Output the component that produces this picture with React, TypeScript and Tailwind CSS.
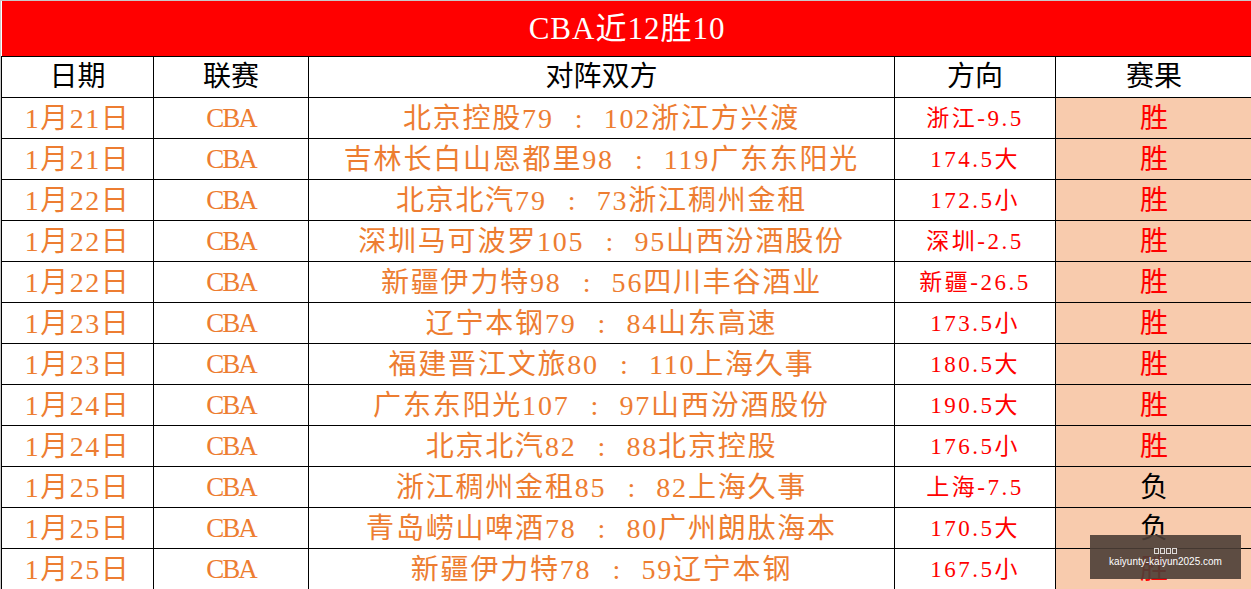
import React from "react"

type Row = {
  date: string
  home: string
  away: string
  dir: string
  result: "胜" | "负"
}

const rows: Row[] = [
  { date: "1月21日", home: "北京控股79", away: "102浙江方兴渡", dir: "浙江-9.5", result: "胜" },
  { date: "1月21日", home: "吉林长白山恩都里98", away: "119广东东阳光", dir: "174.5大", result: "胜" },
  { date: "1月22日", home: "北京北汽79", away: "73浙江稠州金租", dir: "172.5小", result: "胜" },
  { date: "1月22日", home: "深圳马可波罗105", away: "95山西汾酒股份", dir: "深圳-2.5", result: "胜" },
  { date: "1月22日", home: "新疆伊力特98", away: "56四川丰谷酒业", dir: "新疆-26.5", result: "胜" },
  { date: "1月23日", home: "辽宁本钢79", away: "84山东高速", dir: "173.5小", result: "胜" },
  { date: "1月23日", home: "福建晋江文旅80", away: "110上海久事", dir: "180.5大", result: "胜" },
  { date: "1月24日", home: "广东东阳光107", away: "97山西汾酒股份", dir: "190.5大", result: "胜" },
  { date: "1月24日", home: "北京北汽82", away: "88北京控股", dir: "176.5小", result: "胜" },
  { date: "1月25日", home: "浙江稠州金租85", away: "82上海久事", dir: "上海-7.5", result: "负" },
  { date: "1月25日", home: "青岛崂山啤酒78", away: "80广州朗肽海本", dir: "170.5大", result: "负" },
  { date: "1月25日", home: "新疆伊力特78", away: "59辽宁本钢", dir: "167.5小", result: "胜" },
]

const font = "font-['Liberation_Serif','Noto_Sans_CJK_SC',serif]"

export default function App() {
  return (
    <div className={`relative w-[1251px] h-[589px] overflow-hidden bg-white border-t border-l border-[#c8c8c8] ${font}`}>
      <table className="w-[1251px] table-fixed border-collapse">
        <colgroup>
          <col className="w-[152px]" />
          <col className="w-[155px]" />
          <col className="w-[586px]" />
          <col className="w-[161px]" />
          <col className="w-[197px]" />
        </colgroup>
        <thead>
          <tr className="h-[55px]">
            <th colSpan={5} className="bg-[#ff0000] text-white text-[31px] font-normal text-center border-b border-black leading-none tracking-[1px]">
              CBA近12胜10
            </th>
          </tr>
          <tr className="h-[41px] text-[28px] text-black">
            <th className="font-normal border border-black leading-none">日期</th>
            <th className="font-normal border border-black leading-none">联赛</th>
            <th className="font-normal border border-black leading-none">对阵双方</th>
            <th className="font-normal border border-black leading-none">方向</th>
            <th className="font-normal border border-black leading-none">赛果</th>
          </tr>
        </thead>
        <tbody>
          {rows.map((r, i) => (
            <tr key={i} className="h-[41px]">
              <td className="border border-black text-center text-[28px] text-[#ed7d31] leading-none whitespace-nowrap tracking-[1.5px] pt-[2px]">
                {r.date}
              </td>
              <td className="border border-black text-center text-[27px] text-[#ed7d31] leading-none tracking-[-2px] pt-[2px]">
                CBA
              </td>
              <td className="border border-black text-center text-[28px] text-[#ed7d31] leading-none whitespace-nowrap tracking-[1.8px] pt-[2px]">
                {r.home}
                <span className="inline-block w-[50px] text-center tracking-normal">:</span>
                {r.away}
              </td>
              <td className="border border-black text-center text-[23px] text-[#ff0000] leading-none whitespace-nowrap tracking-[2.5px] pt-[2px]">
                {r.dir}
              </td>
              <td
                className={`border border-black bg-[#f8cbad] text-center text-[28px] leading-none pt-[2px] ${
                  r.result === "胜" ? "text-[#ff0000]" : "text-black"
                }`}
              >
                {r.result}
              </td>
            </tr>
          ))}
        </tbody>
      </table>

      {/* watermark */}
      <div className="absolute left-[1089px] top-[534px] w-[151px] h-[44px] bg-[#4b3e36]/90 flex flex-col items-center justify-center gap-[3px]">
        <div className="flex gap-px">
          <span className="w-[5px] h-[6px] border border-white/80" />
          <span className="w-[5px] h-[6px] border border-white/80" />
          <span className="w-[5px] h-[6px] border border-white/80" />
          <span className="w-[5px] h-[6px] border border-white/80" />
        </div>
        <span className="text-[10px] leading-none text-white font-['Liberation_Sans',sans-serif]">
          kaiyunty-kaiyun2025.com
        </span>
      </div>
    </div>
  )
}
